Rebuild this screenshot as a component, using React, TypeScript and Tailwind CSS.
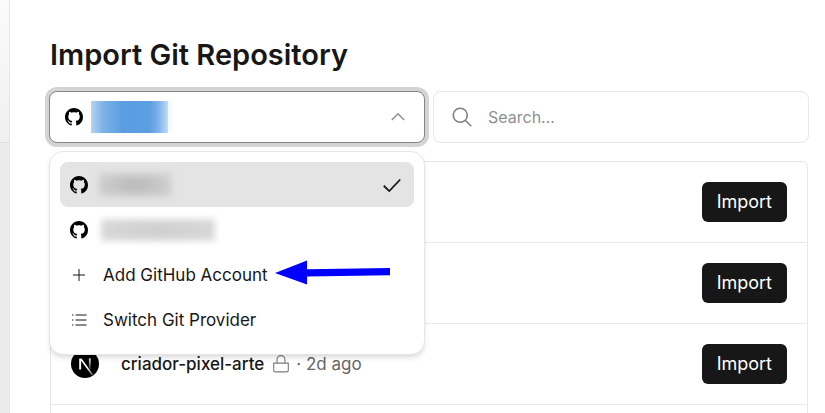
import { useState, type ReactNode } from 'react'

const repos = [
  { name: '', age: '' },
  { name: '', age: '' },
  { name: 'criador-pixel-arte', age: '2d ago' },
]

function GitHubMark() {
  return (
    <svg width="18" height="18" viewBox="0 0 16 16" fill="black" className="shrink-0" aria-hidden="true">
      <path d="M8 0C3.58 0 0 3.58 0 8c0 3.54 2.29 6.53 5.47 7.59.4.07.55-.17.55-.38 0-.19-.01-.82-.01-1.49-2.01.37-2.53-.49-2.69-.94-.09-.23-.48-.94-.82-1.13-.28-.15-.68-.52-.01-.53.63-.01 1.08.58 1.23.82.72 1.21 1.87.87 2.33.66.07-.52.28-.87.51-1.07-1.78-.2-3.64-.89-3.64-3.95 0-.87.31-1.59.82-2.15-.08-.2-.36-1.02.08-2.12 0 0 .67-.21 2.2.82.64-.18 1.32-.27 2-.27.68 0 1.36.09 2 .27 1.53-1.04 2.2-.82 2.2-.82.44 1.1.16 1.92.08 2.12.51.56.82 1.27.82 2.15 0 3.07-1.87 3.75-3.65 3.95.29.25.54.73.54 1.48 0 1.07-.01 1.93-.01 2.2 0 .21.15.46.55.38A8.013 8.013 0 0016 8c0-4.42-3.58-8-8-8z" />
    </svg>
  )
}

function NextMark() {
  return (
    <svg width="28" height="28" viewBox="0 0 28 28" className="shrink-0" aria-hidden="true">
      <defs>
        <linearGradient id="next-diagonal" x1="16" y1="17" x2="22" y2="25" gradientUnits="userSpaceOnUse">
          <stop stopColor="white" />
          <stop offset="1" stopColor="white" stopOpacity="0.3" />
        </linearGradient>
        <linearGradient id="next-stem" x1="0" y1="8" x2="0" y2="20" gradientUnits="userSpaceOnUse">
          <stop stopColor="white" />
          <stop offset="1" stopColor="white" stopOpacity="0.1" />
        </linearGradient>
      </defs>
      <circle cx="14" cy="14" r="14" />
      <path d="M22.2 24.5 10.6 8.4H8.2v11.2h1.9v-8.8l10.7 14.8c.5-.3 1-.7 1.4-1.1Z" fill="url(#next-diagonal)" />
      <path d="M17.9 8.4h1.8v11.2h-1.8z" fill="url(#next-stem)" />
    </svg>
  )
}

function LineIcon({ children, className }: { children: ReactNode; className: string }) {
  return (
    <svg viewBox="0 0 16 16" fill="none" stroke="currentColor" className={className} aria-hidden="true">
      {children}
    </svg>
  )
}

function MenuItem({ icon, children, selected = false }: { icon: ReactNode; children: ReactNode; selected?: boolean }) {
  return (
    <button
      type="button"
      role="menuitem"
      className={`relative flex h-[45px] w-full items-center gap-[15px] rounded-lg px-2.5 text-left ${selected ? 'bg-[#e4e4e4]' : ''}`}
    >
      <span className="flex w-[18px] shrink-0 justify-center">{icon}</span>
      {children}
    </button>
  )
}

export default function App() {
  const [open, setOpen] = useState(true)
  const [query, setQuery] = useState('')

  return (
    <div className="flex h-screen overflow-hidden bg-white font-[Inter,sans-serif] text-[17px] leading-6 text-[#171717]">
      <div className="flex w-2.5 shrink-0 flex-col border-r border-[#e6e6e6]">
        <div className="h-[143px] border-b border-[#dedede] bg-linear-to-b from-[#fbfbfb] to-[#f0f0f0]" />
        <div className="grow bg-[#ebebeb]" />
      </div>

      <main className="min-w-0 grow pt-[37px] pr-4 pl-[39px]">
        <h1 className="px-px text-[29px] leading-9 font-semibold">Import Git Repository</h1>

        <div className="mt-[18px] grid grid-cols-2 gap-2">
          <div className="relative">
            <button
              type="button"
              aria-haspopup="menu"
              aria-expanded={open}
              aria-label="Git account"
              onClick={() => setOpen(!open)}
              className="flex h-[52px] w-full items-center rounded-lg border border-[#868686] bg-white pr-[17px] pl-[15px] ring-4 ring-[#d4d4d4]"
            >
              <GitHubMark />
              <span className="ml-2 h-8 w-[84px] bg-[linear-gradient(to_right,#b4d4f4,#7db3e9_14%,#5a9de0_38%,#5c9fe1_70%,#7fb2e9_80%,#bcd7f4_91%,#f3f8fd_92%,#ffffff)]" />
              <LineIcon className="ml-auto size-[18px] text-[#8f8f8f]">
                <path d="m2.5 10.7 5.5-5.5 5.5 5.5" strokeWidth="1.3" />
              </LineIcon>
            </button>

            {open && (
              <div
                role="menu"
                className="absolute top-[60px] right-0 left-0 z-10 rounded-[14px] border border-[#e6e6e6] bg-white p-2.5 pb-3 shadow-md"
              >
                <MenuItem icon={<GitHubMark />} selected>
                  <span className="-ml-1 h-6 w-[72px] bg-[radial-gradient(ellipse_at_center,#b8b8b8,#d6d6d6)] blur-[3px]" />
                  <LineIcon className="mr-0.5 ml-auto size-5">
                    <path d="m1.4 8.6 4.4 4.3 8.8-9.3" strokeWidth="1.4" />
                  </LineIcon>
                </MenuItem>
                <MenuItem icon={<GitHubMark />}>
                  <span className="-ml-0.5 h-[22px] w-[114px] bg-[radial-gradient(ellipse_at_center,#cecece,#dcdcdc)] blur-[3px]" />
                </MenuItem>
                <MenuItem
                  icon={
                    <LineIcon className="size-4">
                      <path d="M8 2v12M2 8h12" />
                    </LineIcon>
                  }
                >
                  Add GitHub Account
                  <svg
                    width="115"
                    height="25"
                    viewBox="0 0 115 25"
                    fill="#0000fe"
                    className="absolute top-2 left-[215px]"
                    aria-hidden="true"
                  >
                    <path d="M0 13 32 .5v8.7l83-1.2v7.2l-83 1.2v8.2Z" />
                  </svg>
                </MenuItem>
                <MenuItem
                  icon={
                    <LineIcon className="size-4">
                      <path d="M4.5 3h11M4.5 8h11M4.5 13h11" />
                      <path d="M1 3h1.4M1 8h1.4M1 13h1.4" />
                    </LineIcon>
                  }
                >
                  Switch Git Provider
                </MenuItem>
              </div>
            )}
          </div>

          <label className="flex h-[52px] items-center gap-4 rounded-lg border border-[#e8e8e8] px-[18px]">
            <LineIcon className="size-5 shrink-0 text-[#808080]">
              <circle cx="6.6" cy="6.6" r="5.6" strokeWidth="1.3" />
              <path d="m10.6 10.6 4.8 4.8" strokeWidth="1.3" />
            </LineIcon>
            <input
              type="text"
              aria-label="Search repositories"
              placeholder="Search…"
              value={query}
              onChange={(e) => setQuery(e.target.value)}
              className="w-full min-w-0 text-base outline-none placeholder:text-[#8f8f8f]"
            />
          </label>
        </div>

        <ul className="mx-px mt-[18px] rounded-md border border-[#e8e8e8] pb-6">
          {repos.map((repo, i) => (
            <li key={i} className="flex items-center border-b border-[#e8e8e8] px-5 py-5">
              {repo.name && (
                <>
                  <NextMark />
                  <span className="ml-[22px] font-medium">{repo.name}</span>
                  <LineIcon className="ml-2 size-[18px] text-[#7d7d7d]">
                    <path d="M1.5 7.2h13v6.3q0 1.5-1.5 1.5H3q-1.5 0-1.5-1.5ZM4.5 7V4a3.5 3.5 0 0 1 7 0v3" />
                  </LineIcon>
                  <span className="ml-1.5 text-[#666666]">· {repo.age}</span>
                </>
              )}
              <button type="button" className="ml-auto h-10 rounded-md bg-[#171717] px-[15px] text-lg text-white">
                Import
              </button>
            </li>
          ))}
        </ul>
      </main>
    </div>
  )
}
